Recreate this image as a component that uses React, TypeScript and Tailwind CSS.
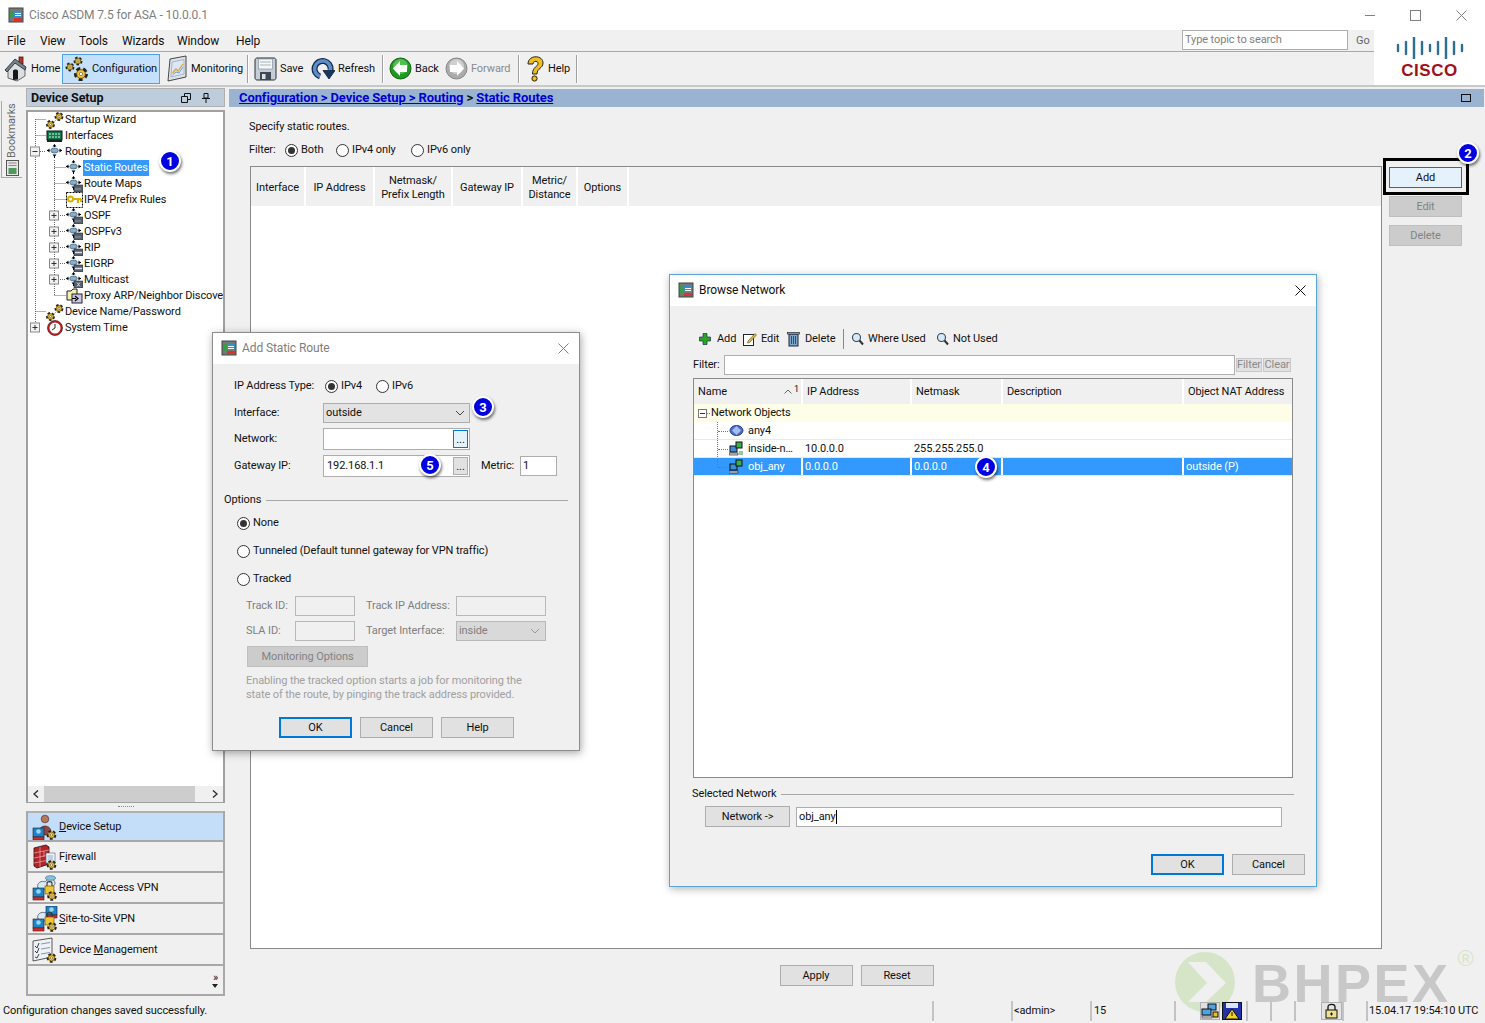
import React, { ReactNode } from 'react';

// --- small drawings -------------------------------------------------------

const Gear = ({ x, y, r }: { x: number; y: number; r: number }) => (
  <g>
    <circle cx={x} cy={y} r={r} fill="#e9b92c" stroke="#222" strokeWidth={r * 0.55} strokeDasharray={`${r * 0.7} ${r * 0.55}`} />
    <circle cx={x} cy={y} r={r * 0.78} fill="#edc53e" stroke="#4a3a10" strokeWidth="0.6" />
    <circle cx={x} cy={y} r={r * 0.3} fill="#fff" stroke="#333" strokeWidth="0.5" />
  </g>
);

const AppIcon = () => (
  <svg width="16" height="16" viewBox="0 0 16 16" className="shrink-0">
    <rect x="1" y="1" width="14" height="14" fill="#777" stroke="#444" />
    <rect x="2" y="4" width="4" height="7" fill="#3c9a4a" />
    <rect x="6" y="4" width="8" height="6" fill="#2f8fd0" />
    <rect x="7" y="6" width="6" height="1" fill="#fff" />
    <rect x="7" y="8" width="6" height="1" fill="#fff" />
    <rect x="6" y="11" width="8" height="3" fill="#d8342c" />
  </svg>
);

const CloseX = ({ color }: { color: string }) => (
  <svg width="11" height="11" viewBox="0 0 11 11" className="shrink-0">
    <path d="M0.5 0.5L10.5 10.5M10.5 0.5L0.5 10.5" stroke={color} strokeWidth="1" />
  </svg>
);

const House = () => (
  <svg width="24" height="26" viewBox="0 0 24 26" className="shrink-0">
    <rect x="15" y="1" width="4" height="7" fill="#b5342c" stroke="#4a1410" strokeWidth="0.800" />
    <path d="M4 14V22L13 25L21 20V11L11 6Z" fill="#dcdfe2" stroke="#444" strokeWidth="0.800" />
    <path d="M1 14L11 3L22 11L21 14L11 7L3 16Z" fill="#75818c" stroke="#2c3238" strokeWidth="0.900" />
    <path d="M9 24V15C9 13 14 13 14 15V23.500Z" fill="#15181b" />
  </svg>
);

const GearPair = () => (
  <svg width="24" height="28" viewBox="0 0 24 28" className="shrink-0">
    <Gear x={13} y={6} r={3.5} />
    <Gear x={5} y={12} r={3.5} />
    <Gear x={16} y={19} r={5.5} />
  </svg>
);

const MonitorIcon = () => (
  <svg width="21" height="27" viewBox="0 0 21 27" className="shrink-0">
    <path d="M3 4L19 1V22L1 26Z" fill="#dfe3e8" stroke="#333" strokeWidth="0.900" />
    <path d="M5 7L17 4.500V19L4 22Z" fill="#dbe7f6" stroke="#8896a6" strokeWidth="0.600" />
    <path d="M5.500 18L9 14L11 16L16 9" fill="none" stroke="#e0a02a" strokeWidth="1.200" />
    <path d="M5.500 20L9 17L12 18L16 12" fill="none" stroke="#6e9fd2" strokeWidth="1" />
  </svg>
);

const Floppy = () => (
  <svg width="23" height="24" viewBox="0 0 23 24" className="shrink-0">
    <path d="M3 1H20C21 1 22 2 22 3V21C22 22 21 23 20 23H3C2 23 1 22 1 21V3C1 2 2 1 3 1Z" fill="#c5cdd6" stroke="#25303c" />
    <rect x="4.500" y="2" width="14" height="10" fill="#f6f7f8" stroke="#7a8794" strokeWidth="0.600" />
    <path d="M6 5H17M6 8H17" stroke="#aab3bc" />
    <path d="M6 15H17V23H6Z" fill="#3d4956" />
    <rect x="8" y="17" width="3.500" height="5" fill="#dde2e6" />
  </svg>
);

const RefreshIcon = () => (
  <svg width="24" height="24" viewBox="0 0 24 24" className="shrink-0">
    <path d="M19.500 13A8 8 0 1 0 9 19.500" fill="none" stroke="#12294f" strokeWidth="6" />
    <path d="M19.500 13A8 8 0 1 0 9 19.500" fill="none" stroke="#5d8fc6" strokeWidth="3.500" />
    <path d="M12 13.500H24L18 22Z" fill="#183664" stroke="#0e1d38" strokeWidth="0.800" />
  </svg>
);

const RoundArrow = ({ on, flip }: { on: boolean; flip?: boolean }) => (
  <svg width="23" height="23" viewBox="0 0 23 23" className="shrink-0">
    <circle cx="11.5" cy="11.5" r="10.5" fill={on ? '#1f9a1f' : '#ababab'} stroke={on ? '#0f5f0f' : '#858585'} />
    <circle cx="11.5" cy="9.5" r="7.500" fill={on ? '#4fc04f' : '#cfcfcf'} />
    <path d={flip ? 'M12 4L19 11.5L12 19V15H5V8H12Z' : 'M11 4L4 11.5L11 19V15H18V8H11Z'} fill="#fff" />
  </svg>
);

const Question = () => (
  <svg width="20" height="26" viewBox="-1 0 20 26" className="shrink-0">
    <path d="M2 8C2 -1.500 17 -1.500 17 7C17 12.500 11 12 11 18H6.500C6.500 10.500 12 11 12 7.500C12 4.500 7 4.500 7 8Z" fill="#edbe1e" stroke="#222" strokeWidth="1" />
    <circle cx="8.500" cy="22.500" r="2.600" fill="#edbe1e" stroke="#222" strokeWidth="1" />
  </svg>
);

// the four-arrow router mark used all over the tree
const Router = ({ tag }: { tag?: 'dots' | 'two' | 'x' }) => (
  <svg width="17" height="16" viewBox="0 0 17 16" className="shrink-0">
    <path d="M7.500 3V1M7.500 11V14M0 6.500H2.500M12.500 6.500H15" stroke="#000" strokeWidth="1" />
    <path d="M7.500 0L5.500 2.500H9.500ZM7.500 13L5.500 10.500H9.500ZM0 6.500L2.500 4.500V8.500ZM15 6.500L12.500 4.500V8.500Z" fill="#000" />
    <ellipse cx="7.500" cy="6.500" rx="3.800" ry="2.500" fill="#7fb0cf" stroke="#345" strokeWidth="0.6" />
    {tag && <rect x="8" y="9" width="9" height="7" fill="#55606e" stroke="#222" strokeWidth="0.5" />}
    {tag === 'dots' && <path d="M9.500 13H15.500" stroke="#dde" strokeDasharray="1 1" />}
    {tag === 'two' && <path d="M9 12.500H16" stroke="#dde" strokeWidth="1.500" />}
    {tag === 'x' && <path d="M11 10.500L14 14.500M14 10.500L11 14.500" stroke="#dde" />}
  </svg>
);

const TreeIcon = ({ kind }: { kind: string }) => {
  if (kind === 'gears')
    return (
      <svg width="18" height="17" viewBox="0 0 18 17" className="shrink-0">
        <path d="M5 13L12 6" stroke="#888" strokeDasharray="1 1" />
        <Gear x={13} y={4.500} r={3.500} />
        <Gear x={4.500} y={12.500} r={3.500} />
      </svg>
    );
  if (kind === 'iface')
    return (
      <svg width="18" height="14" viewBox="0 0 18 14" className="shrink-0">
        <rect x="1" y="2" width="15" height="9" fill="#0c7d4a" stroke="#111" />
        <path d="M3 5H14M3 8H14" stroke="#e6f3e6" strokeDasharray="2 1" />
        <rect x="1" y="11" width="15" height="2" fill="#222" />
      </svg>
    );
  if (kind === 'key')
    return (
      <svg width="17" height="16" viewBox="0 0 17 16" className="shrink-0">
        <rect x="0.500" y="0.500" width="16" height="15" fill="#fff" stroke="#000" strokeDasharray="2 1" />
        <circle cx="4.500" cy="7" r="2.500" fill="none" stroke="#d9b100" strokeWidth="2" />
        <path d="M7 7H15M12 7V11M15 7V10" stroke="#d9b100" strokeWidth="2" />
      </svg>
    );
  if (kind === 'proxy')
    return (
      <svg width="17" height="16" viewBox="0 0 17 16" className="shrink-0">
        <path d="M1 3H5L7 1H11V12H1Z" fill="#f4efb0" stroke="#222" />
        <rect x="6" y="6" width="10" height="9" fill="#c9c6e8" stroke="#222" />
        <path d="M6 10.500H10M9 8L12 10.500L9 13" stroke="#000" strokeWidth="1.200" fill="none" />
      </svg>
    );
  if (kind === 'clock')
    return (
      <svg width="16" height="16" viewBox="0 0 16 16" className="shrink-0">
        <circle cx="8" cy="8" r="6.500" fill="#fff" stroke="#d01818" strokeWidth="2" />
        <circle cx="8" cy="8" r="7.500" fill="none" stroke="#111" strokeWidth="0.600" />
        <path d="M8 4V8L5 10" stroke="#222" fill="none" />
      </svg>
    );
  return null;
};

const DeviceBox = ({ x, y }: { x: number; y: number }) => (
  <g>
    <rect x={x} y={y} width="11" height="9" fill="#1d84c6" stroke="#123" strokeWidth="0.600" />
    <circle cx={x + 5.500} cy={y + 3.500} r="2.300" fill="#9fd4f0" />
    <rect x={x} y={y + 9} width="11" height="3" fill="#cf2f28" stroke="#611" strokeWidth="0.600" />
  </g>
);

const NavIcon = ({ kind }: { kind: string }) => (
  <svg width="26" height="26" viewBox="0 0 26 26" className="shrink-0">
    {kind === 'setup' && (
      <g>
        <circle cx="13" cy="5" r="3.800" fill="#b4785a" stroke="#3a2416" strokeWidth="0.600" />
        <path d="M7 18C7 10 19 10 19 18V21H7Z" fill="#8e4a44" stroke="#3a2416" strokeWidth="0.600" />
        <DeviceBox x={1} y={14} />
        <Gear x={19.500} y={21} r={3.800} />
      </g>
    )}
    {kind === 'firewall' && (
      <g>
        <path d="M2 4L14 1L17 3V20L5 24L2 22Z" fill="#b3242a" stroke="#2b0a0a" strokeWidth="0.800" />
        <path d="M2 9L17 6M2 14L17 11M2 19L17 16M8 3V23M12 7V13" stroke="#eab0a8" strokeWidth="0.700" />
        <rect x="14" y="9" width="9" height="10" fill="#eef3fa" stroke="#567" strokeWidth="0.600" />
        <path d="M15.500 12H21M15.500 14H21M15.500 16H21" stroke="#6a8cb0" strokeWidth="0.700" />
        <Gear x={19.500} y={21} r={3.800} />
      </g>
    )}
    {(kind === 'remote' || kind === 'site') && (
      <g>
        <path d="M6 13C4 8 10 5 13 7C15 3 23 3 23 8C23 12 17 13 12 15Z" fill="#dbe9f5" stroke="#345" strokeWidth="0.700" />
        {kind === 'remote' && <ellipse cx="18.500" cy="3" rx="5" ry="2.300" fill="#86c1de" stroke="#345" strokeWidth="0.500" />}
        {kind === 'site' && <DeviceBox x={14} y={0} />}
        <DeviceBox x={1} y={13} />
        <rect x="13" y="11" width="9" height="8" fill="#efc733" stroke="#5a4308" strokeWidth="0.600" />
        <path d="M15 11V8.500C15 6 20 6 20 8.500V11" fill="none" stroke="#333" strokeWidth="1.100" />
        <Gear x={20} y={21} r={3.800} />
      </g>
    )}
    {kind === 'mgmt' && (
      <g>
        <path d="M1 4L20 1V20L1 24Z" fill="#eef1f6" stroke="#333" strokeWidth="0.800" />
        <path d="M3 9L5 11L7 6M3 14L5 16L7 11M3 20L5 21L7 17" fill="none" stroke="#111" strokeWidth="0.800" />
        <path d="M9 7L18 5.500M9 12L18 10.500M9 17L18 15.500" stroke="#7c8ca0" strokeWidth="0.900" />
        <Gear x={19.500} y={21} r={3.800} />
      </g>
    )}
  </svg>
);

const Search = () => (
  <svg width="13" height="14" viewBox="0 0 13 14" className="shrink-0">
    <circle cx="5.500" cy="5.500" r="4" fill="#d6e9f4" stroke="#345" strokeWidth="1.100" />
    <path d="M8.500 8.500L12 12.500" stroke="#333" strokeWidth="2" />
  </svg>
);

const NetHost = ({ ip }: { ip?: boolean }) => (
  <svg width="15" height="15" viewBox="0 0 15 15" className="shrink-0">
    <rect x="1" y="5" width="7" height="6" fill="#3f8fd6" stroke="#111" />
    <rect x="7" y="1" width="6" height="6" fill="#3cae4a" stroke="#111" />
    <rect x="0" y="12" width="9" height="2" fill="#ddd" stroke="#111" strokeWidth="0.600" />
    {ip && <path d="M11 10V14M13 10V14" stroke="#1a9a3a" />}
  </svg>
);

const Badge = ({ n, className }: { n: number; className: string }) => (
  <div
    className={`absolute z-30 flex h-[22px] w-[22px] items-center justify-center rounded-full border-2 border-white bg-[#0000e0] text-[13px] leading-none font-bold text-white shadow-[1px_2px_3px_rgba(0,0,0,0.55)] ${className}`}
  >
    {n}
  </div>
);

// --- small widgets --------------------------------------------------------

const Sep = () => <div className="mx-[5px] h-[28px] w-[2px] shrink-0 border-l border-[#a0a0a0] bg-white" />;

const ToolItem = ({ icon, label, muted, className = '' }: { icon: ReactNode; label: string; muted?: boolean; className?: string }) => (
  <div className={`flex h-[30px] shrink-0 items-center gap-[3px] ${muted ? 'text-[#8a8a8a]' : ''} ${className}`}>
    {icon}
    <span className="mt-[1px]">{label}</span>
  </div>
);

const Radio = ({ on, className = '' }: { on?: boolean; className?: string }) => (
  <span className={`flex h-[13px] w-[13px] shrink-0 items-center justify-center rounded-full border border-[#333] bg-white ${className}`}>
    {on && <span className="h-[7px] w-[7px] rounded-full bg-[#333]" />}
  </span>
);

const Btn = ({ children, kind = 'normal', className = 'w-[73px]' }: { children: ReactNode; kind?: 'normal' | 'focus' | 'hot' | 'off'; className?: string }) => {
  const look = {
    normal: 'border border-[#adadad] bg-[#e1e1e1]',
    focus: 'border-2 border-[#0078d7] bg-[#e1e1e1]',
    hot: 'border border-[#0078d7] bg-[#e5f1fb]',
    off: 'border border-[#bfbfbf] bg-[#cccccc] text-[#838383]',
  }[kind];
  return <div className={`flex h-[21px] shrink-0 items-center justify-center ${look} ${className}`}>{children}</div>;
};

const Chevron = ({ color }: { color: string }) => (
  <svg width="10" height="6" viewBox="0 0 10 6" className="shrink-0">
    <path d="M1 1L5 5L9 1" fill="none" stroke={color} />
  </svg>
);

const DialogTitle = ({ title, muted }: { title: string; muted?: boolean }) => (
  <div className="flex h-[31px] shrink-0 items-center justify-between bg-white pr-[10px] pb-[1px] pl-[8px]">
    <div className={`flex items-center gap-[5px] text-[12px] ${muted ? 'text-[#808080]' : ''}`}>
      <AppIcon />
      <span>{title}</span>
    </div>
    <CloseX color={muted ? '#808080' : '#111'} />
  </div>
);

const TreeRow = ({ pad, icon, label, selected }: { pad: string; icon: ReactNode; label: string; selected?: boolean }) => (
  <div className={`flex h-[16px] items-center whitespace-nowrap ${pad}`}>
    <span className="flex w-[18px] shrink-0 justify-center">{icon}</span>
    <span className={selected ? 'bg-[#3399ff] px-[1px] text-white' : 'px-[1px]'}>{label}</span>
  </div>
);

const NavButton = ({ icon, children, active }: { icon: ReactNode; children: ReactNode; active?: boolean }) => (
  <div
    className={`flex h-[31px] items-center gap-[1px] border-b-2 border-[#a8a8a8] pl-[4px] ${active ? 'border-t-2 border-t-[#b0b0b0] bg-[#c4defa]' : ''}`}
  >
    {icon}
    <span>{children}</span>
  </div>
);

const Th = ({ children, className }: { children: ReactNode; className: string }) => (
  <div className={`flex shrink-0 items-center justify-center border-r-2 border-white pt-[2px] text-center leading-[14px] ${className}`}>{children}</div>
);

const COLS = 'grid-cols-[109px_109px_91px_181px_1fr]';

const ObjRow = ({ cells, selected, icon, last }: { cells: string[]; selected?: boolean; icon: ReactNode; last?: boolean }) => (
  <div className={`grid h-[18px] ${COLS} border-b border-[#e8e8e8] ${selected ? 'bg-[#3399ff] text-white' : ''}`}>
    <div className="relative flex items-center border-r-2 border-white pl-[35px]">
      {icon}
      <span className="ml-[4px] truncate">{cells[0]}</span>
      <span className={`absolute top-0 left-[23px] w-0 border-l border-dotted border-[#777] ${last ? 'h-[9px]' : 'h-full'}`} />
      <span className="absolute top-[9px] left-[24px] w-[10px] border-t border-dotted border-[#777]" />
    </div>
    <div className="flex items-center border-r-2 border-white pl-[2px]">{cells[1]}</div>
    <div className="flex items-center border-r-2 border-white pl-[2px]">{cells[2]}</div>
    <div className="flex items-center border-r-2 border-white pl-[2px]">{cells[3]}</div>
    <div className="flex items-center pl-[2px]">{cells[4]}</div>
  </div>
);

const StatusCell = ({ className, children }: { className: string; children?: ReactNode }) => (
  <div className={`flex h-[20px] shrink-0 items-center gap-[2px] border-l-2 border-[#c4c4c4] ${className}`}>{children}</div>
);

// --- dialogs --------------------------------------------------------------

const AddStaticRoute = () => (
  <div className="absolute top-[332px] left-[212px] z-20 flex h-[419px] w-[368px] flex-col border border-[#8d8d8d] bg-[#f0f0f0] whitespace-nowrap shadow-[1px_2px_8px_rgba(0,0,0,0.35)]">
    <DialogTitle title="Add Static Route" muted />
    <div className="flex flex-1 flex-col pt-[12px] pl-[21px]">
      <div className="flex h-[20px] items-center">
        <span className="w-[85px]">IP Address Type:</span>
        <span className="flex w-[49px] items-center gap-[3px] pl-[6px]"><Radio on />IPv4</span>
        <span className="ml-[8px] flex items-center gap-[3px]"><Radio />IPv6</span>
      </div>
      <div className="mt-[7px] flex h-[20px] items-center">
        <span className="w-[89px]">Interface:</span>
        <div className="flex h-[20px] w-[147px] items-center justify-between border border-[#adadad] bg-[#e3e3e3] pr-[4px] pl-[2px]">
          outside
          <Chevron color="#444" />
        </div>
      </div>
      <div className="mt-[5px] flex h-[22px] items-center">
        <span className="w-[89px]">Network:</span>
        <div className="flex h-[22px] w-[147px] items-center justify-end border border-[#adadad] bg-white pr-[1px]">
          <div className="flex h-[18px] w-[15px] items-center justify-center border border-[#0078d7] bg-[#e5f1fb] leading-none">...</div>
        </div>
      </div>
      <div className="mt-[5px] flex h-[22px] items-center">
        <span className="w-[89px]">Gateway IP:</span>
        <div className="flex h-[22px] w-[147px] items-center justify-between border border-[#adadad] bg-white pr-[1px] pl-[3px]">
          192.168.1.1
          <div className="flex h-[18px] w-[15px] items-center justify-center border border-[#adadad] bg-[#e1e1e1] leading-none">...</div>
        </div>
        <span className="ml-[11px] w-[39px]">Metric:</span>
        <div className="flex h-[20px] w-[37px] items-center border border-[#adadad] bg-white pl-[2px]">1</div>
      </div>

      <div className="mt-[15px] -ml-[10px] flex h-[16px] items-center gap-[5px] pr-[11px]">
        <span>Options</span>
        <div className="flex-1 border-t border-[#a8a8a8]" />
      </div>
      <div className="mt-[5px] flex h-[20px] items-center gap-[3px] pl-[3px]"><Radio on />None</div>
      <div className="mt-[8px] flex h-[20px] items-center gap-[3px] pl-[3px]"><Radio />Tunneled (Default tunnel gateway for VPN traffic)</div>
      <div className="mt-[8px] flex h-[20px] items-center gap-[3px] pl-[3px]"><Radio />Tracked</div>

      <div className="mt-[7px] flex h-[20px] items-center pl-[12px] text-[#7f7f7f]">
        <span className="w-[49px]">Track ID:</span>
        <div className="h-[20px] w-[60px] border border-[#b8b8b8]" />
        <span className="ml-[11px] w-[90px]">Track IP Address:</span>
        <div className="h-[20px] w-[90px] border border-[#b8b8b8]" />
      </div>
      <div className="mt-[5px] flex h-[20px] items-center pl-[12px] text-[#7f7f7f]">
        <span className="w-[49px]">SLA ID:</span>
        <div className="h-[20px] w-[60px] border border-[#b8b8b8]" />
        <span className="ml-[11px] w-[90px]">Target Interface:</span>
        <div className="flex h-[20px] w-[90px] items-center justify-between border border-[#b8b8b8] bg-[#d9d9d9] pr-[5px] pl-[2px]">
          inside
          <Chevron color="#9a9a9a" />
        </div>
      </div>
      <div className="mt-[5px] pl-[13px]">
        <Btn kind="off" className="w-[121px]">Monitoring Options</Btn>
      </div>
      <div className="mt-[7px] pl-[12px] leading-[14px] text-[#a0a0a0]">
        Enabling the tracked option starts a job for monitoring the
        <br />
        state of the route, by pinging the track address provided.
      </div>
      <div className="mt-[15px] flex gap-[8px] pl-[45px]">
        <Btn kind="focus">OK</Btn>
        <Btn>Cancel</Btn>
        <Btn>Help</Btn>
      </div>
    </div>
  </div>
);

const BrowseNetwork = () => (
  <div className="absolute top-[274px] left-[669px] z-20 flex h-[613px] w-[648px] flex-col border border-[#5aa5d8] bg-[#f0f0f0] whitespace-nowrap shadow-[1px_2px_8px_rgba(0,0,0,0.3)]">
    <DialogTitle title="Browse Network" />
    <div className="flex flex-1 flex-col pr-[23px] pl-[23px]">
      <div className="mt-[23px] flex h-[20px] items-center pl-[6px]">
        <svg width="12" height="12" viewBox="0 0 12 12" className="shrink-0">
          <path d="M4 0.500H8V4H11.500V8H8V11.500H4V8H0.500V4H4Z" fill="#2aa52a" stroke="#114" strokeWidth="0.600" />
        </svg>
        <span className="ml-[6px] w-[26px]">Add</span>
        <svg width="14" height="14" viewBox="0 0 14 14" className="shrink-0">
          <rect x="0.500" y="2.500" width="10" height="11" fill="#fff" stroke="#223" />
          <path d="M5 9L12 1.500L13.500 3L6.500 10.500L4.500 11Z" fill="#e6b82a" stroke="#333" strokeWidth="0.500" />
        </svg>
        <span className="ml-[4px] w-[26px]">Edit</span>
        <svg width="13" height="16" viewBox="0 0 13 16" className="shrink-0">
          <rect x="2" y="3" width="9" height="12" fill="#7ea6cc" stroke="#223" />
          <path d="M4.500 5V13M6.500 5V13M8.500 5V13" stroke="#223" strokeWidth="0.700" />
          <rect x="0.500" y="1.500" width="12" height="1.500" fill="#9db" stroke="#223" strokeWidth="0.700" />
        </svg>
        <span className="ml-[5px] w-[38px]">Delete</span>
        <div className="h-[20px] w-[1px] bg-[#888]" />
        <span className="ml-[7px]"><Search /></span>
        <span className="ml-[4px] w-[68px]">Where Used</span>
        <Search />
        <span className="ml-[4px]">Not Used</span>
      </div>
      <div className="mt-[6px] flex h-[20px] items-center">
        <span className="w-[31px]">Filter:</span>
        <div className="h-[20px] w-[511px] border border-[#b0b0b0] bg-white" />
        <div className="ml-[1px] flex h-[14px] w-[26px] items-center justify-center border border-[#c8c8c8] bg-[#e1e1e1] text-[#8a8a8a]">Filter</div>
        <div className="ml-[1px] flex h-[14px] w-[28px] items-center justify-center border border-[#c8c8c8] bg-[#e1e1e1] text-[#8a8a8a]">Clear</div>
      </div>
      <div className="mt-[3px] flex h-[400px] flex-col border border-[#8a8a8a] bg-white">
        <div className={`grid h-[25px] shrink-0 ${COLS} bg-[#f0f0f0]`}>
          <div className="relative flex items-center border-r-2 border-white pt-[1px] pl-[4px]">
            Name
            <svg width="8" height="5" viewBox="0 0 8 5" className="absolute top-[10px] left-[90px]">
              <path d="M0.500 4.500L4 1L7.500 4.500" fill="none" stroke="#666" />
            </svg>
            <span className="absolute top-[5px] left-[100px] text-[9px] leading-[10px]">1</span>
          </div>
          <div className="flex items-center border-r-2 border-white pt-[1px] pl-[4px]">IP Address</div>
          <div className="flex items-center border-r-2 border-white pt-[1px] pl-[4px]">Netmask</div>
          <div className="flex items-center border-r-2 border-white pt-[1px] pl-[4px]">Description</div>
          <div className="flex items-center pt-[1px] pl-[4px] whitespace-nowrap">Object NAT Address</div>
        </div>
        <div className="flex h-[18px] shrink-0 items-center bg-[#fdfde8] pl-[4px]">
          <span className="flex h-[9px] w-[9px] items-center justify-center border border-[#777] bg-white text-[9px] leading-none"><span className="h-[1px] w-[5px] bg-[#333]" /></span>
          <span className="w-[3px] border-t border-dotted border-[#777]" />
          <span className="ml-[1px]">Network Objects</span>
        </div>
        <ObjRow
          cells={['any4', '', '', '', '']}
          icon={
            <svg width="15" height="15" viewBox="0 0 15 15" className="shrink-0">
              <ellipse cx="7.500" cy="7.500" rx="6.500" ry="5" fill="#4a6fd8" stroke="#223a8a" />
              <path d="M3 7.500L7.500 3L12 7.500L7.500 12Z" fill="#a6bef0" />
            </svg>
          }
        />
        <ObjRow cells={['inside-n…', '10.0.0.0', '255.255.255.0', '', '']} icon={<NetHost ip />} />
        <ObjRow cells={['obj_any', '0.0.0.0', '0.0.0.0', '', 'outside (P)']} icon={<NetHost />} selected last />
      </div>
      <div className="mt-[8px] flex h-[16px] items-center gap-[4px] -mr-[1px] -ml-[1px]">
        <span>Selected Network</span>
        <div className="flex-1 border-t border-[#a8a8a8]" />
      </div>
      <div className="mt-[4px] flex items-center pl-[12px]">
        <Btn className="w-[85px]">Network -&gt;</Btn>
        <div className="ml-[6px] flex h-[20px] w-[486px] items-center border border-[#adadad] bg-white pl-[2px]">
          obj_any<span className="h-[14px] w-[1px] bg-black" />
        </div>
      </div>
      <div className="mt-[27px] flex justify-end gap-[8px] -mr-[12px]">
        <Btn kind="focus">OK</Btn>
        <Btn>Cancel</Btn>
      </div>
    </div>
  </div>
);

// --- page -----------------------------------------------------------------

const MENU = [
  { label: 'File', width: 'w-[33px]' },
  { label: 'View', width: 'w-[39px]' },
  { label: 'Tools', width: 'w-[43px]' },
  { label: 'Wizards', width: 'w-[55px]' },
  { label: 'Window', width: 'w-[59px]' },
  { label: 'Help', width: 'w-[30px]' },
];

const App: React.FC = () => {
  return (
    <div className="relative flex h-[1023px] w-[1485px] flex-col overflow-hidden bg-[#f0f0f0] font-['Roboto',sans-serif] text-[11px] leading-[16px] tracking-[-0.1px] text-[#111]">
      {/* Title bar */}
      <div className="flex h-[30px] shrink-0 items-center bg-white pl-[8px]">
        <AppIcon />
        <span className="ml-[5px] text-[12px] text-[#808080]">Cisco ASDM 7.5 for ASA - 10.0.0.1</span>
        <div className="ml-auto flex items-center gap-[35px] pr-[18px]">
          <div className="h-[1px] w-[10px] bg-[#808080]" />
          <div className="h-[11px] w-[11px] border border-[#808080]" />
          <CloseX color="#808080" />
        </div>
      </div>

      {/* Menu + toolbar with logo on the right */}
      <div className="flex h-[57px] shrink-0 border-b-2 border-[#c8c8c8]">
        <div className="flex w-[1374px] flex-col">
          <div className="flex h-[22px] items-center border-b border-[#a8a8a8] pl-[7px] text-[12px]">
            {MENU.map((m) => (
              <span key={m.label} className={`pt-[1px] ${m.width}`}>{m.label}</span>
            ))}
            <div className="ml-auto flex h-[20px] w-[166px] items-center self-start border border-[#adadad] bg-white pl-[2px] text-[11px] text-[#808080]">Type topic to search</div>
            <span className="w-[26px] pl-[8px] text-[11px] text-[#666]">Go</span>
          </div>
          <div className="flex flex-1 items-center pl-[4px]">
            <ToolItem icon={<House />} label="Home" className="w-[58px]" />
            <ToolItem icon={<GearPair />} label="Configuration" className="w-[98px] border border-[#4ea0e8] bg-[#c4e0fb] pl-[2px]" />
            <ToolItem icon={<MonitorIcon />} label="Monitoring" className="ml-[6px] w-[76px] pl-[1px]" />
            <Sep />
            <ToolItem icon={<Floppy />} label="Save" className="w-[51px]" />
            <ToolItem icon={<RefreshIcon />} label="Refresh" className="ml-[6px] w-[66px]" />
            <Sep />
            <ToolItem icon={<RoundArrow on />} label="Back" className="w-[50px]" />
            <ToolItem icon={<RoundArrow on={false} flip />} label="Forward" muted className="ml-[6px] w-[68px]" />
            <Sep />
            <ToolItem icon={<Question />} label="Help" className="w-[46px]" />
            <Sep />
          </div>
        </div>
        <div className="flex flex-1 flex-col items-center bg-white pt-[7px]">
          <svg width="68" height="22" viewBox="0 0 68 22" className="shrink-0">
            {[
              [2, 6], [10, 12], [18, 21], [26, 12], [34, 6], [42, 12], [50, 21], [58, 12], [66, 6],
            ].map(([x, h]) => (
              <line key={x} x1={x} x2={x} y1={11 - h / 2} y2={11 + h / 2} stroke="#2c6e94" strokeWidth="2.400" strokeLinecap="round" />
            ))}
          </svg>
          <span className="mt-[3px] font-['Liberation_Sans',sans-serif] text-[17px] leading-[17px] font-bold tracking-[0.5px] text-[#a0101c]">CISCO</span>
        </div>
      </div>

      {/* Body */}
      <div className="flex h-[913px] shrink-0">
        {/* Bookmarks tab */}
        <div className="w-[26px] shrink-0 pt-[14px] pl-[1px]">
          <div className="flex h-[77px] w-[21px] flex-col items-center border-b border-l border-[#a8a8a8] pt-[2px] text-[#6a6a6a]">
            <span className="h-[55px] rotate-180 text-left leading-[16px] [writing-mode:vertical-rl]">Bookmarks</span>
            <svg width="13" height="16" viewBox="0 0 13 16" className="mt-[2px] shrink-0">
              <rect x="0.500" y="0.500" width="12" height="15" fill="#e6e6e6" stroke="#555" />
              <rect x="2.500" y="8" width="8" height="6" fill="#4c9a58" />
              <path d="M2.500 3H10.500M2.500 5.500H10.500" stroke="#888" />
            </svg>
          </div>
        </div>

        {/* Left navigation */}
        <div className="flex h-[909px] w-[199px] shrink-0 flex-col">
          <div className="mt-[1px] flex h-[19px] shrink-0 items-center justify-between border border-[#b0b0b0] bg-[#bdcddc] pr-[14px] pl-[4px] text-[12.500px] font-bold">
            Device Setup
            <span className="flex items-center gap-[11px]">
              <svg width="10" height="10" viewBox="0 0 10 10"><path d="M0.500 3.500H6.500V9.500H0.500ZM3.500 3.500V0.500H9.500V6.500H6.500" fill="none" stroke="#111" /></svg>
              <svg width="8" height="10" viewBox="0 0 8 10"><path d="M2 0.500H6V5H2ZM0 5.500H8M4 5.500V10" fill="none" stroke="#111" /></svg>
            </span>
          </div>
          <div className="relative mt-[3px] flex-1 overflow-hidden border-x-2 border-t-2 border-b border-[#a0a0a0] bg-white">
            <svg width="60" height="240" viewBox="0 0 60 240" className="pointer-events-none absolute top-0 left-0">
              <g stroke="#666" strokeDasharray="1 1" fill="none">
                <path d="M7.500 7V215" />
                <path d="M7.500 7.500H18M7.500 23.500H18M12 39.500H18M7.500 199.500H18" />
                <path d="M26.500 48V183" />
                <path d="M26.500 55.500H38M26.500 71.500H38M26.500 87.500H38M32 103.500H38M32 119.500H38M32 135.500H38M32 151.500H38M32 167.500H38M26.500 183.500H38" />
              </g>
              {[[7, 39, true], [26, 103, false], [26, 119, false], [26, 135, false], [26, 151, false], [26, 167, false], [7, 215, false]].map(([cx, cy, minus]) => (
                <g key={`${cx}-${cy}`}>
                  <rect x={Number(cx) - 4.500} y={Number(cy) - 4} width="9" height="9" fill="#f2f2f2" stroke="#888" />
                  <path d={minus ? `M${Number(cx) - 2.500} ${Number(cy) + 0.500}H${Number(cx) + 2.500}` : `M${Number(cx) - 2.500} ${Number(cy) + 0.500}H${Number(cx) + 2.500}M${Number(cx)} ${Number(cy) - 2}V${Number(cy) + 3}`} stroke="#333" />
                </g>
              ))}
            </svg>
            <div className="relative whitespace-nowrap">
              <TreeRow pad="pl-[18px]" icon={<TreeIcon kind="gears" />} label="Startup Wizard" />
              <TreeRow pad="pl-[18px]" icon={<TreeIcon kind="iface" />} label="Interfaces" />
              <TreeRow pad="pl-[18px]" icon={<Router />} label="Routing" />
              <TreeRow pad="pl-[37px]" icon={<Router />} label="Static Routes" selected />
              <TreeRow pad="pl-[37px]" icon={<Router tag="dots" />} label="Route Maps" />
              <TreeRow pad="pl-[37px]" icon={<TreeIcon kind="key" />} label="IPV4 Prefix Rules" />
              <TreeRow pad="pl-[37px]" icon={<Router tag="dots" />} label="OSPF" />
              <TreeRow pad="pl-[37px]" icon={<Router tag="dots" />} label="OSPFv3" />
              <TreeRow pad="pl-[37px]" icon={<Router tag="two" />} label="RIP" />
              <TreeRow pad="pl-[37px]" icon={<Router tag="two" />} label="EIGRP" />
              <TreeRow pad="pl-[37px]" icon={<Router tag="x" />} label="Multicast" />
              <TreeRow pad="pl-[37px]" icon={<TreeIcon kind="proxy" />} label="Proxy ARP/Neighbor Discovery" />
              <TreeRow pad="pl-[18px]" icon={<TreeIcon kind="gears" />} label="Device Name/Password" />
              <TreeRow pad="pl-[18px]" icon={<TreeIcon kind="clock" />} label="System Time" />
            </div>
            {/* horizontal scroll bar */}
            <div className="absolute right-0 bottom-0 left-0 flex h-[16px] items-center bg-[#f0f0f0]">
              <div className="flex w-[16px] justify-center"><svg width="6" height="8" viewBox="0 0 6 8"><path d="M5 0.500L1 4L5 7.500" fill="none" stroke="#333" strokeWidth="1.500" /></svg></div>
              <div className="h-[16px] w-[151px] bg-[#cdcdcd]" />
              <div className="ml-auto flex w-[16px] justify-center"><svg width="6" height="8" viewBox="0 0 6 8"><path d="M1 0.500L5 4L1 7.500" fill="none" stroke="#333" strokeWidth="1.500" /></svg></div>
            </div>
          </div>
          <div className="flex h-[8px] shrink-0 items-center justify-center">
            <div className="h-[2px] w-[16px] border-t border-dotted border-[#888]" />
          </div>
          <div className="flex shrink-0 flex-col border-x-2 border-b-2 border-[#a8a8a8]">
            <NavButton icon={<NavIcon kind="setup" />} active><u className="underline">D</u>evice Setup</NavButton>
            <NavButton icon={<NavIcon kind="firewall" />}>F<u className="underline">i</u>rewall</NavButton>
            <NavButton icon={<NavIcon kind="remote" />}><u className="underline">R</u>emote Access VPN</NavButton>
            <NavButton icon={<NavIcon kind="site" />}><u className="underline">S</u>ite-to-Site VPN</NavButton>
            <NavButton icon={<NavIcon kind="mgmt" />}>Device <u className="underline">M</u>anagement</NavButton>
            <div className="flex h-[28px] flex-col items-end justify-center pr-[5px] text-[11px] leading-[9px]">
              <span>»</span>
              <svg width="6" height="4" viewBox="0 0 6 4" className="mt-[2px]"><path d="M0 0H6L3 4Z" fill="#222" /></svg>
            </div>
          </div>
        </div>

        {/* Main panel */}
        <div className="ml-[4px] flex min-w-0 flex-1 flex-col pr-[1px]">
          <div className="mt-[2px] flex h-[18px] shrink-0 items-center justify-between bg-[#9ab3d0] pr-[13px] pl-[10px] text-[13px] font-bold text-[#0000d8]">
            <span>
              <span className="underline">Configuration &gt; Device Setup &gt; Routing</span>
              <span className="text-[#111]"> &gt; </span>
              <span className="underline">Static Routes</span>
            </span>
            <div className="h-[8px] w-[10px] border-[1.5px] border-[#111]" />
          </div>
          <div className="mt-[10px] flex h-[20px] shrink-0 items-center pl-[20px]">Specify static routes.</div>
          <div className="mt-[3px] flex h-[20px] shrink-0 items-center pl-[20px]">
            <span className="w-[36px]">Filter:</span>
            <span className="flex w-[51px] items-center gap-[3px]"><Radio on />Both</span>
            <span className="flex w-[75px] items-center gap-[3px]"><Radio />IPv4 only</span>
            <span className="flex items-center gap-[3px]"><Radio />IPv6 only</span>
          </div>
          <div className="mt-[6px] flex shrink-0">
            <div className="ml-[21px] flex h-[783px] w-[1132px] flex-col border border-[#8a8a8a] bg-white">
              <div className="flex h-[39px] shrink-0">
                <div className="flex bg-[#f0f0f0]">
                  <Th className="w-[55px]">Interface</Th>
                  <Th className="w-[69px]">IP Address</Th>
                  <Th className="w-[78px]">Netmask/<br />Prefix Length</Th>
                  <Th className="w-[70px]">Gateway IP</Th>
                  <Th className="w-[55px]">Metric/<br />Distance</Th>
                  <Th className="w-[51px]">Options</Th>
                </div>
                <div className="flex-1 bg-[#f0f0f0]" />
              </div>
            </div>
            <div className="flex flex-col gap-[8px] pt-[1px] pl-[7px]">
              <Btn kind="hot">Add</Btn>
              <Btn kind="off">Edit</Btn>
              <Btn kind="off">Delete</Btn>
            </div>
          </div>
          <div className="mt-[16px] flex shrink-0 justify-center gap-[8px]">
            <Btn>Apply</Btn>
            <Btn>Reset</Btn>
          </div>
        </div>
      </div>

      {/* Status bar */}
      <div className="relative z-10 flex h-[23px] shrink-0 items-start pt-[1px] pl-[3px]">
        <span className="mt-[2px] w-[929px] shrink-0">Configuration changes saved successfully.</span>
        <StatusCell className="w-[79px]" />
        <StatusCell className="w-[79px] pl-[1px]">&lt;admin&gt;</StatusCell>
        <StatusCell className="w-[84px] pl-[2px]">15</StatusCell>
        <StatusCell className="w-[72px] pl-[24px]">
          <svg width="20" height="18" viewBox="0 0 20 18" className="shrink-0">
            <rect x="0.500" y="0.500" width="19" height="17" fill="#e0e0e0" stroke="#b0b0b0" />
            <rect x="8" y="2" width="8" height="6" fill="#4fa3e0" stroke="#111" />
            <rect x="2" y="7" width="9" height="6" fill="#4fa3e0" stroke="#111" />
            <rect x="2" y="14" width="10" height="2" fill="#ddd" stroke="#111" strokeWidth="0.500" />
            <rect x="13" y="10" width="5" height="5" fill="#e8c11c" stroke="#111" />
          </svg>
          <svg width="20" height="18" viewBox="0 0 20 18" className="shrink-0">
            <rect x="0.500" y="0.500" width="19" height="17" fill="#2233aa" stroke="#111" />
            <rect x="4" y="1" width="12" height="5" fill="#dbe4ff" />
            <path d="M10 7L17 17H3Z" fill="#f2d21c" stroke="#111" />
            <path d="M10 10V14" stroke="#111" />
          </svg>
        </StatusCell>
        <StatusCell className="w-[24px]" />
        <StatusCell className="w-[24px]" />
        <StatusCell className="w-[48px] pl-[25px]">
          <svg width="21" height="18" viewBox="0 0 21 18" className="shrink-0">
            <rect x="0.500" y="0.500" width="20" height="17" fill="#e4e4e4" stroke="#b0b0b0" />
            <path d="M7 8V5C7 1.500 14 1.500 14 5V8" fill="none" stroke="#111" strokeWidth="1.300" />
            <rect x="5" y="8" width="11" height="8" fill="#efe08a" stroke="#111" />
            <path d="M10.500 10.500V13.500M9 12H12" stroke="#111" />
          </svg>
        </StatusCell>
        <StatusCell className="w-[24px]" />
        <StatusCell className="flex-1 pl-[1px] whitespace-nowrap">15.04.17 19:54:10 UTC</StatusCell>
      </div>

      {/* Watermark */}
      <div className="pointer-events-none absolute top-[952px] left-[1175px] flex items-start">
        <svg width="60" height="60" viewBox="0 0 60 60" className="shrink-0">
          <circle cx="30" cy="30" r="30" fill="#d6e4c8" />
          <path d="M13 10H31L51 31L31 50H13L32 31Z" fill="#f0f0f0" />
        </svg>
        <span className="mt-[1px] ml-[17px] font-['Liberation_Sans',sans-serif] text-[54px] leading-[60px] font-bold tracking-[2.500px] text-[#c8c8c8]">BHPEX</span>
        <span className="-mt-[6px] ml-[7px] font-['Liberation_Sans',sans-serif] text-[22px] leading-[26px] text-[#d6e4c8]">®</span>
      </div>

      <AddStaticRoute />
      <BrowseNetwork />

      {/* Black frame round the Add button */}
      <div className="absolute top-[158px] left-[1383px] z-10 h-[37px] w-[86px] border-[3.5px] border-black" />

      <Badge n={1} className="top-[150px] left-[159px]" />
      <Badge n={2} className="top-[142px] left-[1457px]" />
      <Badge n={3} className="top-[396px] left-[472px]" />
      <Badge n={4} className="top-[456px] left-[975px]" />
      <Badge n={5} className="top-[454px] left-[419px]" />
    </div>
  );
};

export default App;
